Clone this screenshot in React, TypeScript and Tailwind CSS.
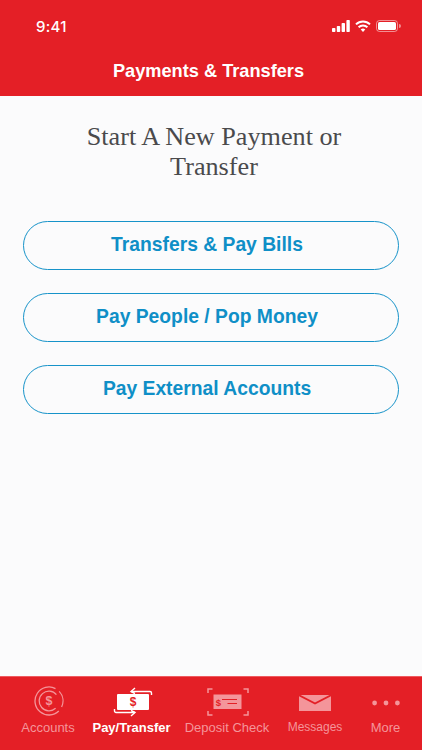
import { FC, ReactNode } from "react";

const buttons = ["Transfers & Pay Bills", "Pay People / Pop Money", "Pay External Accounts"];

const AccountsIcon = () => (
  <svg width="30" height="30" viewBox="0 0 30 30" fill="none" stroke="currentColor" strokeWidth="1.3" className="ml-[1px] -mt-[2px]">
    <path d="M24.8 25A14 14 0 1 1 21.5 2.6" />
    <path d="M25.2 5.4A14 14 0 0 1 27.6 21" />
    <path d="M21.6 22.2A9.8 9.8 0 1 1 22.4 8.6" />
    <text x="15" y="19.4" textAnchor="middle" fontSize="12.5" fontWeight="700" fontFamily="Liberation Sans" fill="currentColor" stroke="none">$</text>
  </svg>
);

const TransferIcon = () => (
  <svg width="40" height="30" viewBox="0 0 40 30" fill="none" stroke="currentColor" strokeWidth="1.4" className="ml-[3px] -mt-[1px]">
    <rect x="4" y="7" width="32" height="16" rx="1" fill="currentColor" stroke="none" />
    <path d="M18 4.5h19a1.5 1.5 0 0 1 1.5 1.5v2" />
    <path d="M22 1l-4 3.5 4 2" />
    <path d="M22 25.5H3A1.5 1.5 0 0 1 1.5 24v-2" />
    <path d="M18 29l4-3.5-4-2" />
    <text x="20" y="19.2" textAnchor="middle" fontSize="12" fontWeight="700" fontFamily="Liberation Sans" fill="#e41f26" stroke="none">$</text>
  </svg>
);

const CheckIcon = () => (
  <svg width="42" height="28" viewBox="0 0 42 28" fill="none" className="ml-[2px]">
    <path d="M1 5V1h4.5M36.5 1H41v4M1 23v4h4.5M36.5 27H41v-4" stroke="currentColor" strokeWidth="1.5" />
    <rect x="6.5" y="6.5" width="28" height="14.5" fill="currentColor" />
    <text x="11.5" y="17.6" textAnchor="middle" fontSize="9.5" fontWeight="700" fontFamily="Liberation Sans" fill="#e41f26">$</text>
    <path d="M15 11.5h15M20.5 15.5h9.5" stroke="#e41f26" strokeWidth="1.1" />
  </svg>
);

const MessagesIcon = () => (
  <svg width="32" height="16" viewBox="0 0 32 16" fill="currentColor" className="mt-[2px]">
    <path d="M0 1.2l16 8.3L32 1.2V16H0z" />
    <path d="M1.5 0h29L16 7.6z" />
  </svg>
);

const MoreIcon = () => (
  <svg width="28" height="6" viewBox="0 0 28 6" fill="currentColor" className="mt-[2px]">
    <circle cx="2.6" cy="3" r="2.4" />
    <circle cx="14" cy="3" r="2.4" />
    <circle cx="25.4" cy="3" r="2.4" />
  </svg>
);

const StatusIcons = () => (
  <div className="flex items-center gap-[5px] text-white">
    <svg width="18" height="12" viewBox="0 0 18 12" fill="currentColor">
      <rect x="0" y="8" width="3.4" height="4" rx="0.8" />
      <rect x="4.8" y="6" width="3.4" height="6" rx="0.8" />
      <rect x="9.6" y="3" width="3.4" height="9" rx="0.8" />
      <rect x="14.4" y="0" width="3.4" height="12" rx="0.8" />
    </svg>
    <svg width="16" height="12" viewBox="0 0 16 12" fill="none" stroke="currentColor" strokeWidth="2">
      <path d="M1 4.4a10 10 0 0 1 14 0" />
      <path d="M3.6 7.2a6.3 6.3 0 0 1 8.8 0" />
      <path d="M8 12l-2.3-2.4a3.2 3.2 0 0 1 4.6 0z" fill="currentColor" stroke="none" />
    </svg>
    <svg width="25" height="12" viewBox="0 0 25 12" fill="none">
      <rect x="0.5" y="0.5" width="21" height="11" rx="3" stroke="currentColor" opacity="0.5" />
      <rect x="2" y="2" width="18" height="8" rx="1.6" fill="currentColor" />
      <path d="M23 4v4a2 2 0 0 0 0-4z" fill="currentColor" opacity="0.5" />
    </svg>
  </div>
);

const TabItem: FC<{ label: string; active?: boolean; small?: boolean; icon: ReactNode }> = ({ label, active, small, icon }) => (
  <div className={`flex flex-col items-center ${active ? "text-white" : "text-[#f4959a]"}`}>
    <div className="h-[32px] flex items-center justify-center">{icon}</div>
    <span className={`whitespace-nowrap leading-[16px] ${small ? "text-[12px] mt-[1px]" : "text-[13px] mt-[2px]"} ${active ? "font-bold" : ""}`}>
      {label}
    </span>
  </div>
);

const App: FC = () => {
  return (
    <div className="w-[422px] h-[750px] flex flex-col bg-[#fbfbfc] font-['Liberation_Sans',sans-serif] overflow-hidden">
      <header className="h-[96px] bg-[#e41f26] text-white">
        <div className="h-[52px] pt-[17px] pl-[36px] pr-[21px] flex justify-between items-start">
          <span className="text-[15px] leading-[19px] font-['Inter',sans-serif] font-medium tracking-[0.3px]">9:41</span>
          <div className="pt-[3px]">
            <StatusIcons />
          </div>
        </div>
        <h1 className="text-center text-[18.2px] leading-[22px] font-bold mt-[8px] pr-[5px]">Payments &amp; Transfers</h1>
      </header>

      <main className="flex-1 px-[23px]">
        <h2 className="mt-[26px] pl-[46px] pr-[40px] text-center text-[#4a4a4c] text-[26.2px] leading-[30px] font-['Liberation_Serif',serif]">
          Start A New Payment or Transfer
        </h2>
        <div className="mt-[39px] flex flex-col gap-[23px]">
          {buttons.map((b) => (
            <button
              key={b}
              className="h-[49px] rounded-full border border-[#1793c9] text-[#0f8fc7] text-[19.3px] font-bold pb-[1px] pr-[8px]"
            >
              {b}
            </button>
          ))}
        </div>
      </main>

      <nav className="h-[74px] bg-[#e41f26] border-t-[1px] border-[#ef5a60] grid grid-cols-[90px_83px_108px_68px_73px] pt-[9px]">
        <div className="pl-[6px]">
          <TabItem label="Accounts" icon={<AccountsIcon />} />
        </div>
        <TabItem label="Pay/Transfer" active icon={<TransferIcon />} />
        <TabItem label="Deposit Check" icon={<CheckIcon />} />
        <TabItem label="Messages" small icon={<MessagesIcon />} />
        <TabItem label="More" icon={<MoreIcon />} />
      </nav>
    </div>
  );
};

export default App;
